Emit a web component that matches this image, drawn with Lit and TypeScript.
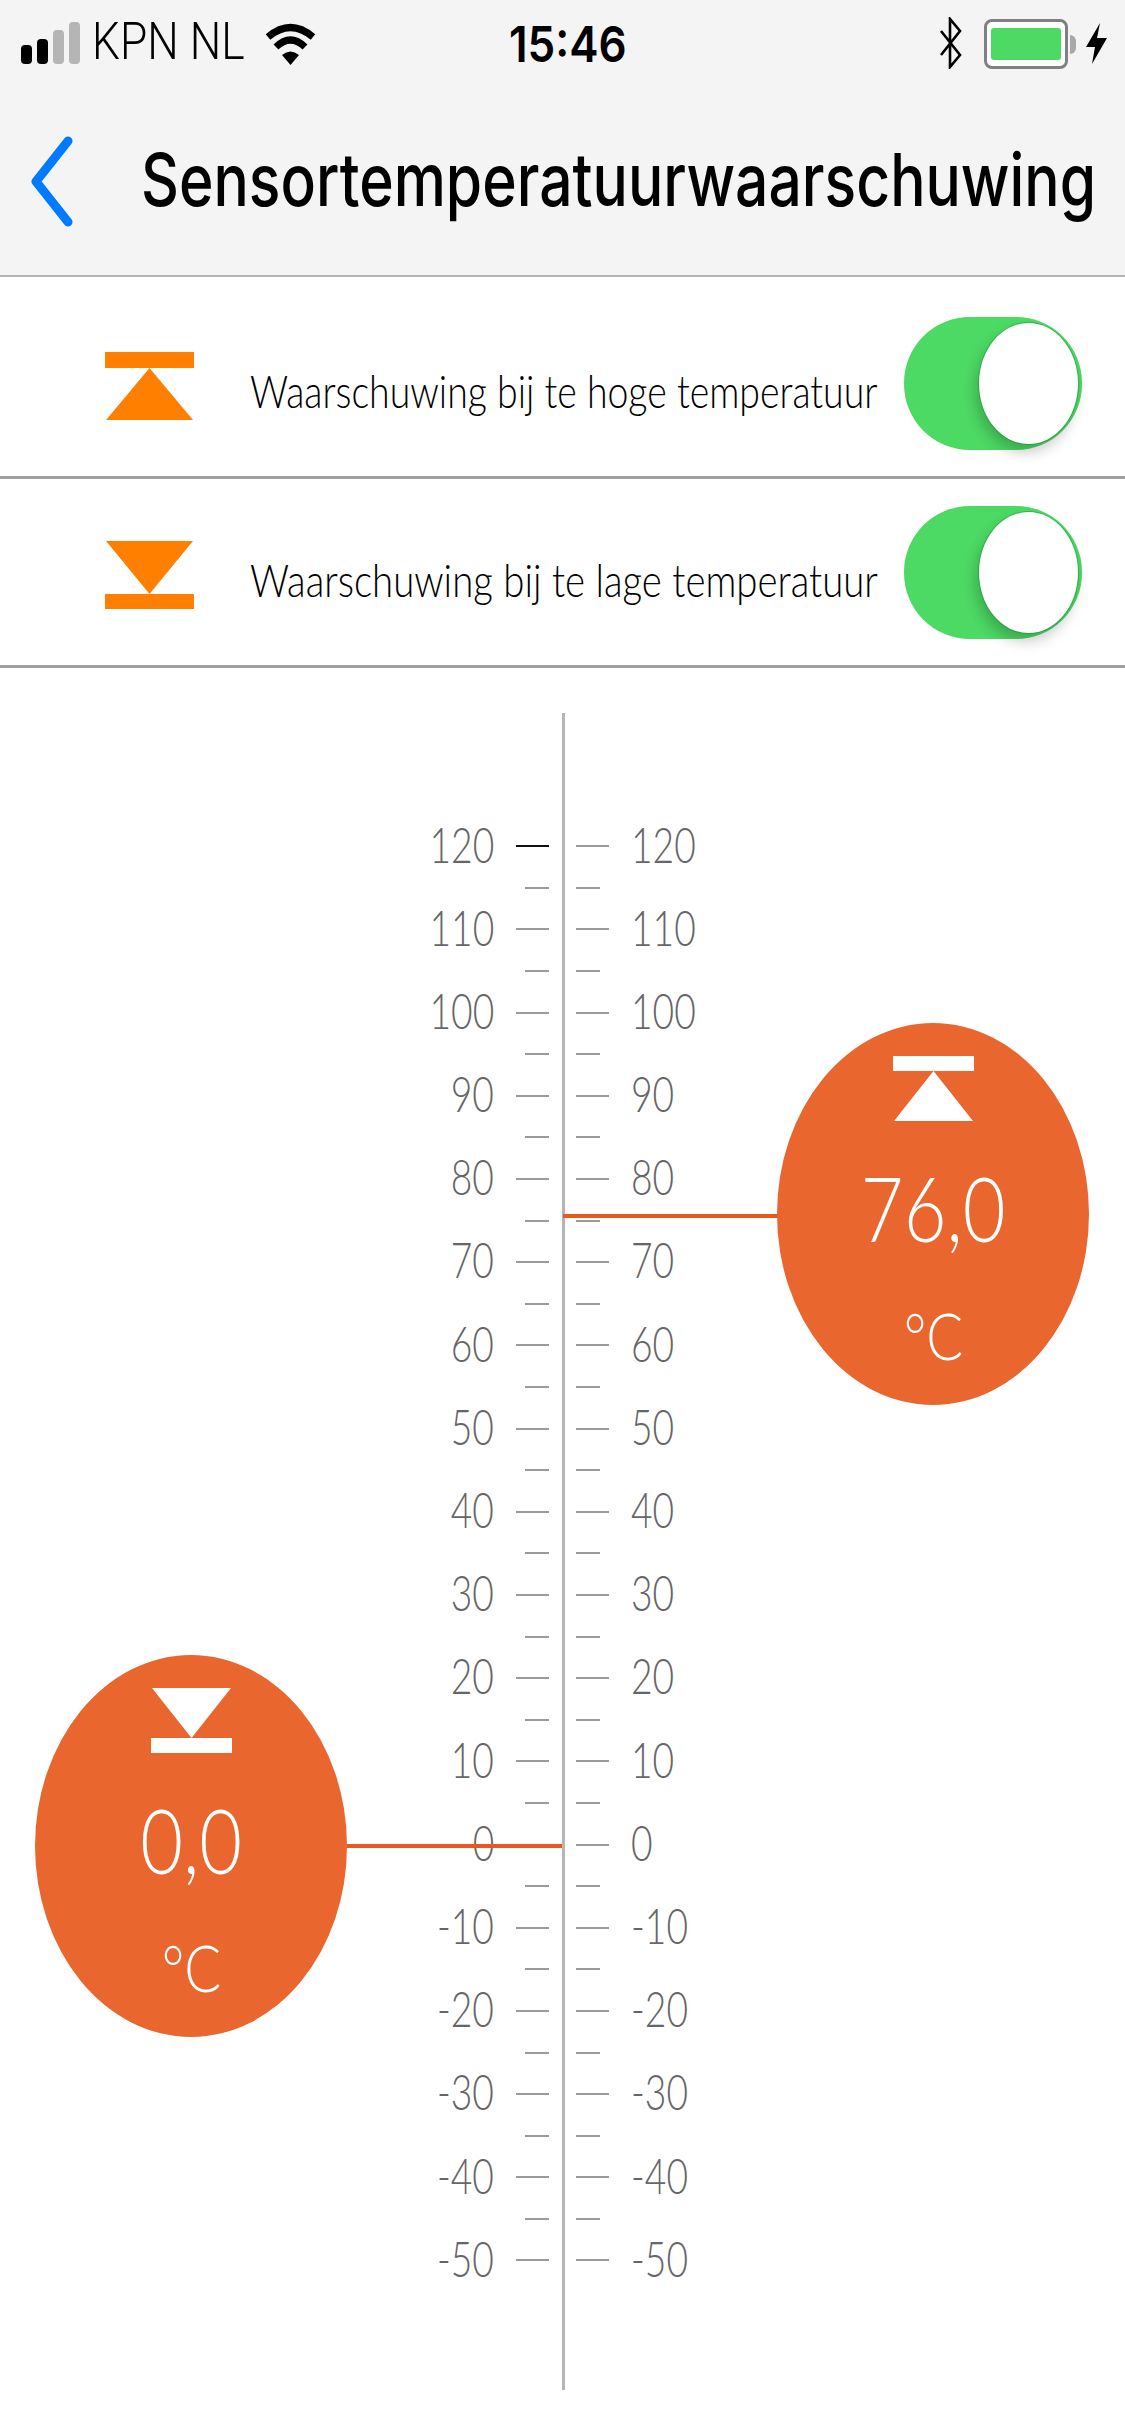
import { LitElement, html, css, svg } from "lit";
import { customElement } from "lit/decorators.js";

const VALUES = [120, 110, 100, 90, 80, 70, 60, 50, 40, 30, 20, 10, 0, -10, -20, -30, -40, -50];

const upIcon = svg`<rect x="0" y="0" width="89" height="16"/><polygon points="44.5,16 88,68 1,68"/>`;
const downIcon = svg`<polygon points="1,0 88,0 44.5,53"/><rect x="0" y="53" width="89" height="15"/>`;

@customElement("app-root")
export class AppRoot extends LitElement {
  static styles = css`
    :host { display: block; width: 1125px; height: 2436px; background: #fff; overflow: hidden; font-family: "Lato", "Liberation Sans", sans-serif; }
    .top { height: 275px; background: #f4f4f4; border-bottom: 2px solid #b4b4b4; box-sizing: content-box; }
    .status { height: 90px; display: flex; align-items: flex-start; position: relative; }
    .bars { display: flex; align-items: flex-end; gap: 5px; margin: 22px 0 0 21px; height: 42px; flex: none; }
    .bars i { display: block; width: 11px; border-radius: 4px; background: #000; }
    .bars i.off { background: #b5b5b5; }
    .b1 { height: 19px; } .b2 { height: 25px; } .b3 { height: 34px; } .b4 { height: 42px; }
    .carrier { width: 147px; flex: none; margin: 12px 0 0 12px; font: 300 52px/60px "Roboto", sans-serif; color: #000; white-space: nowrap; }
    .carrier span { display: inline-block; transform: scaleX(.853); transform-origin: left center; }
    .wifi { margin: 22px 0 0 26px; width: 51px; height: 43px; flex: none; }
    .time { width: 114px; flex: none; margin: 14px 0 0 193px; font: 600 50px/60px "Inter", sans-serif; color: #000; white-space: nowrap; }
    .time span { display: inline-block; transform: scaleX(.88); transform-origin: left center; }
    .bt { margin: 17px 0 0 316px; width: 23px; height: 52px; flex: none; }
    .battery { margin: 19px 0 0 22px; width: 84px; height: 50px; flex: none; box-sizing: border-box; border: 3px solid #808080; border-radius: 8px; padding: 6px 4px; background: #fff; }
    .battery i { display: block; height: 100%; background: #4cd964; border-radius: 3px; }
    .nub { margin: 35px 0 0 2px; width: 6px; height: 19px; flex: none; background: #a8a8a8; border-radius: 0 6px 6px 0; }
    .bolt { margin: 23px 0 0 10px; width: 21px; height: 41px; flex: none; }

    .nav { display: flex; align-items: flex-start; height: 185px; }
    .back { margin: 46px 0 0 31px; width: 42px; height: 91px; flex: none; }
    .title { margin: 45px 0 0 68px; flex: none; font: 500 73px/90px "Inter", sans-serif; color: #000; white-space: nowrap; }
    .title span { display: inline-block; transform: scaleX(.805); transform-origin: left center; }

    .row { display: flex; align-items: center; padding: 27px 43px 26px 105px; border-bottom: 3px solid #a0a0a0; }
    .row.first { padding-top: 40px; }
    .icon { width: 89px; height: 68px; flex: none; fill: #ff8000; margin-top: 5px; }
    .label { width: 627px; margin: 14px 27px 0 56px; flex: none; font-size: 45px; line-height: 50px; font-weight: 300; color: #000; white-space: nowrap; }
    .label span { display: inline-block; transform-origin: left center; }
    .label.first span { transform: scaleX(.832); }
    .label.second span { transform: scaleX(.853); }
    .toggle { width: 178px; height: 133px; flex: none; box-sizing: border-box; background: #4cd964; border-radius: 66px / 66px; padding: 6px 4px 6px 75px; }
    .knob { display: block; width: 99px; height: 121px; background: #fff; border-radius: 50%; box-shadow: 0 0 0 1px rgba(0,130,40,.35), -3px 8px 14px rgba(0,0,0,.22); }

    .canvas { position: relative; height: 1768px; padding-top: 157.5px; box-sizing: border-box; }
    .axis { position: absolute; left: 562px; top: 45px; width: 3px; height: 1677px; background: #b5b5b5; }
    .tick-row { display: grid; grid-template-columns: 494px 55px 27px 55px 1fr; align-items: center; height: 41.6px; }
    .num { font-size: 49px; line-height: 41.6px; font-weight: 300; color: #666; white-space: nowrap; }
    .num span { display: inline-block; transform: translateY(-2.5px) scaleX(.76); }
    .num.l { text-align: right; } .num.l span { transform-origin: right center; }
    .num.r { grid-column: 5; } .num.r span { transform-origin: left center; }
    .t { height: 2px; background: #9a9a9a; }
    .t.left { grid-column: 2; justify-self: end; }
    .t.right { grid-column: 4; justify-self: start; }
    .t.major { width: 33px; }
    .t.minor { width: 24px; }
    .t.black { background: #111; }

    .wire { position: absolute; height: 4px; background: #e9581f; }
    .wire.hi { left: 563px; width: 216px; top: 546px; }
    .wire.lo { left: 347px; width: 215px; top: 1176px; }
    .marker { position: absolute; width: 312px; height: 382px; border-radius: 50%; background: #e9662e; color: #fff; display: flex; flex-direction: column; align-items: center; font-weight: 300; box-sizing: border-box; }
    .marker.hi { left: 777px; top: 355px; padding-top: 33px; }
    .marker.lo { left: 35px; top: 987px; padding-top: 33px; }
    .micon { width: 81px; height: 65px; fill: #fff; flex: none; }
    .val { height: 100px; margin-top: 36px; font-size: 90px; line-height: 100px; white-space: nowrap; }
    .val span { display: inline-block; transform: scaleX(.82); }
    .unit { height: 70px; margin-top: 43px; font-size: 65px; line-height: 70px; white-space: nowrap; }
    .unit span { display: inline-block; transform: scaleX(.84); }
  `;

  private ticks() {
    return VALUES.map((v, i) => {
      const last = i === VALUES.length - 1;
      return html`
        <div class="tick-row">
          <div class="num l"><span>${v}</span></div>
          <div class="t left major ${i === 0 ? "black" : ""}"></div>
          <div class="t right major"></div>
          <div class="num r"><span>${v}</span></div>
        </div>
        ${last ? "" : html`<div class="tick-row">
          <div class="t left minor"></div>
          <div class="t right minor"></div>
        </div>`}
      `;
    });
  }

  private row(text: string, icon: unknown, first: boolean) {
    return html`<div class="row ${first ? "first" : ""}">
      <svg class="icon" viewBox="0 0 89 68">${icon}</svg>
      <div class="label ${first ? "first" : "second"}"><span>${text}</span></div>
      <div class="toggle"><i class="knob"></i></div>
    </div>`;
  }

  render() {
    return html`
      <div class="top">
        <div class="status">
          <div class="bars"><i class="b1"></i><i class="b2"></i><i class="b3 off"></i><i class="b4 off"></i></div>
          <div class="carrier"><span>KPN NL</span></div>
          <svg class="wifi" viewBox="0 0 51 43">
            <path d="M3 15Q25.5 -4 48 15" fill="none" stroke="#000" stroke-width="7"/>
            <path d="M11 25Q25.5 11 40 25" fill="none" stroke="#000" stroke-width="7"/>
            <path d="M17 33Q25.5 26 34 33L25.5 43Z" fill="#000"/>
          </svg>
          <div class="time"><span>15:46</span></div>
          <svg class="bt" viewBox="0 0 23 52"><path d="M2 14L21 38L11 50V2L21 14L2 38" fill="none" stroke="#000" stroke-width="2.6"/></svg>
          <div class="battery"><i></i></div>
          <div class="nub"></div>
          <svg class="bolt" viewBox="0 0 21 41"><path d="M14 0L0 24H9L6 41L21 15H11Z" fill="#000"/></svg>
        </div>
        <div class="nav">
          <svg class="back" viewBox="0 0 42 91"><path d="M37 5L5 45.5L37 86" fill="none" stroke="#007aff" stroke-width="9" stroke-linecap="round" stroke-linejoin="round"/></svg>
          <div class="title"><span>Sensortemperatuurwaarschuwing</span></div>
        </div>
      </div>
      ${this.row("Waarschuwing bij te hoge temperatuur", upIcon, true)}
      ${this.row("Waarschuwing bij te lage temperatuur", downIcon, false)}
      <div class="canvas">
        <div class="axis"></div>
        ${this.ticks()}
        <div class="wire hi"></div>
        <div class="wire lo"></div>
        <div class="marker hi">
          <svg class="micon" viewBox="0 0 81 65"><rect width="81" height="15"/><polygon points="40.5,15 80,65 1,65"/></svg>
          <div class="val"><span>76,0</span></div>
          <div class="unit"><span>°C</span></div>
        </div>
        <div class="marker lo">
          <svg class="micon" viewBox="0 0 81 65"><polygon points="1,0 80,0 40.5,50"/><rect y="50" width="81" height="15"/></svg>
          <div class="val"><span>0,0</span></div>
          <div class="unit"><span>°C</span></div>
        </div>
      </div>
    `;
  }
}
